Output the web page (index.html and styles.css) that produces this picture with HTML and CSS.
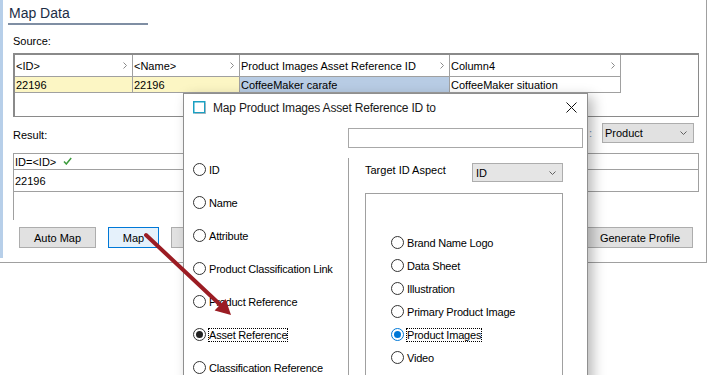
FILE: index.html
```html
<!DOCTYPE html>
<html>
<head>
<meta charset="utf-8">
<link rel="stylesheet" href="styles.css">
</head>
<body>
<div class="panel">
  <div class="inner">
    <div class="title">Map Data</div>
    <div class="label src-label">Source:</div>
    <div class="src">
      <div class="srow head">
        <div class="cell c1"><span>&lt;ID&gt;</span><svg class="chev" width="4" height="7" viewBox="0 0 4 7"><polyline points="0.5,0.5 3.5,3.5 0.5,6.5" fill="none" stroke="#8a8a8a" stroke-width="1"/></svg></div>
        <div class="cell c2"><span>&lt;Name&gt;</span><svg class="chev" width="4" height="7" viewBox="0 0 4 7"><polyline points="0.5,0.5 3.5,3.5 0.5,6.5" fill="none" stroke="#8a8a8a" stroke-width="1"/></svg></div>
        <div class="cell c3"><span>Product Images Asset Reference ID</span><svg class="chev" width="4" height="7" viewBox="0 0 4 7"><polyline points="0.5,0.5 3.5,3.5 0.5,6.5" fill="none" stroke="#8a8a8a" stroke-width="1"/></svg></div>
        <div class="cell c4"><span>Column4</span><svg class="chev" width="4" height="7" viewBox="0 0 4 7"><polyline points="0.5,0.5 3.5,3.5 0.5,6.5" fill="none" stroke="#8a8a8a" stroke-width="1"/></svg></div>
      </div>
      <div class="srow data">
        <div class="cell c1 yel">22196</div>
        <div class="cell c2 yel">22196</div>
        <div class="cell c3 sel">CoffeeMaker carafe</div>
        <div class="cell c4">CoffeeMaker situation</div>
      </div>
    </div>
    <div class="result-bar">
      <div class="label res-label">Result:</div>
      <div class="type">
        <span class="type-label">:</span>
        <div class="select product"><span>Product</span><svg width="7" height="4" viewBox="0 0 7 4"><polyline points="0.5,0.5 3.5,3.5 6.5,0.5" fill="none" stroke="#606060" stroke-width="1"/></svg></div>
      </div>
    </div>
    <div class="result">
      <div class="rrow r1"><span>ID=&lt;ID&gt;</span><svg class="check" width="9" height="8" viewBox="0 0 9 8"><path d="M1 4.5 L3.3 7 L8.2 1" fill="none" stroke="#3b9b3b" stroke-width="1.5"/></svg></div>
      <div class="rrow r2">22196</div>
    </div>
    <div class="buttons">
      <div class="left-btns">
        <button class="btn b-auto">Auto Map</button>
        <button class="btn b-map primary">Map</button>
        <button class="btn b-edit"></button>
      </div>
      <button class="btn b-gen">Generate Profile</button>
    </div>
  </div>
</div>

<div class="dialog">
  <div class="dlg-title">
    <svg class="dlg-icon" width="13" height="13" viewBox="0 0 13 13"><rect x="0.75" y="0.75" width="11" height="11" fill="#fff" stroke="#1aa0c2" stroke-width="1.5"/><path d="M12.5 2 V12.5 H2" fill="none" stroke="#9fb4bf" stroke-width="1"/></svg>
    <span class="dlg-text">Map Product Images Asset Reference ID to</span>
    <svg class="dlg-close" width="11" height="11" viewBox="0 0 11 11"><path d="M0.5 0.5 L10.5 10.5 M10.5 0.5 L0.5 10.5" stroke="#111" stroke-width="1"/></svg>
  </div>
  <div class="search"></div>
  <div class="dlg-body">
    <div class="left-col">
      <div class="opt"><span class="radio"></span><span>ID</span></div>
      <div class="opt"><span class="radio"></span><span>Name</span></div>
      <div class="opt"><span class="radio"></span><span>Attribute</span></div>
      <div class="opt"><span class="radio"></span><span>Product Classification Link</span></div>
      <div class="opt"><span class="radio"></span><span>Product Reference</span></div>
      <div class="opt"><span class="radio checked"></span><span class="focus">Asset Reference</span></div>
      <div class="opt"><span class="radio"></span><span>Classification Reference</span></div>
    </div>
    <div class="right-col">
      <div class="aspect-row">
        <span class="aspect-label">Target ID Aspect</span>
        <div class="select idsel"><span>ID</span><svg width="7" height="4" viewBox="0 0 7 4"><polyline points="0.5,0.5 3.5,3.5 6.5,0.5" fill="none" stroke="#606060" stroke-width="1"/></svg></div>
      </div>
      <div class="box">
        <div class="opt2"><span class="radio"></span><span>Brand Name Logo</span></div>
        <div class="opt2"><span class="radio"></span><span>Data Sheet</span></div>
        <div class="opt2"><span class="radio"></span><span>Illustration</span></div>
        <div class="opt2"><span class="radio"></span><span>Primary Product Image</span></div>
        <div class="opt2"><span class="radio checked blue"></span><span class="focus">Product Images</span></div>
        <div class="opt2"><span class="radio"></span><span>Video</span></div>
      </div>
    </div>
  </div>
</div>

<svg class="arrow" width="708" height="375" viewBox="0 0 708 375">
  <line x1="146" y1="235" x2="221" y2="305.5" stroke="#9b1c23" stroke-width="4" stroke-linecap="round"/>
  <polygon points="231,315 214.6,310.5 225.5,299" fill="#9b1c23"/>
</svg>
</body>
</html>
```

FILE: styles.css
```css
html, body {
  margin: 0;
  padding: 0;
  background: #fff;
}
body {
  font-family: "Liberation Sans", Arial, sans-serif;
  font-size: 11px;
  color: #000;
  width: 708px;
  height: 375px;
  overflow: hidden;
  position: relative;
}

.panel {
  width: 707px;
  height: 263px;
  box-sizing: border-box;
  border-right: 1px solid #a0a0a0;
  border-bottom: 1px solid #a0a0a0;
}
.inner {
  height: 258px;
  box-sizing: border-box;
  border-left: 3px solid #b7cfe9;
}

.title {
  margin-left: 5px;
  width: 140px;
  box-sizing: border-box;
  padding: 5px 0 2px 1px;
  line-height: 16px;
  font-size: 14px;
  color: #1c2d45;
  border-bottom: 2px solid #7f8ea3;
}

.label {
  line-height: 14px;
}
.src-label {
  margin: 9px 0 0 10px;
}

.src {
  margin: 5px 0 0 10px;
  width: 686px;
  height: 64px;
  box-sizing: border-box;
  border-top: 2px solid #8a8a8a;
  border-left: 2px solid #8a8a8a;
  border-right: 1px solid #8a8a8a;
  border-bottom: 1px solid #8a8a8a;
}
.srow {
  display: flex;
}
.cell {
  box-sizing: border-box;
  border-right: 1px solid #a0a0a0;
  border-bottom: 1px solid #a0a0a0;
  padding-left: 1px;
  display: flex;
  align-items: center;
  white-space: nowrap;
  overflow: hidden;
}
.head .cell {
  height: 22px;
  justify-content: space-between;
}
.chev {
  margin-right: 5px;
  flex: none;
}
.data .cell {
  height: 16px;
}
.c1 { width: 118px; }
.c2 { width: 107px; }
.c3 { width: 210px; }
.c4 { width: 171px; }
.yel { background: #fcf6c4; }
.sel { background: #b8cce4; }

.result-bar {
  margin: 6px 12px 0 10px;
  height: 20px;
  display: flex;
  justify-content: space-between;
}
.res-label {
  align-self: flex-end;
  margin-bottom: 1px;
}
.type {
  display: flex;
  align-items: center;
}
.type-label {
  margin-right: 10px;
  color: #6f8fb8;
}
.select {
  box-sizing: border-box;
  background: #e1e1e1;
  border: 1px solid #adadad;
  display: flex;
  align-items: center;
  justify-content: space-between;
}
.product {
  width: 92px;
  height: 20px;
  padding: 0 6px 0 2px;
}

.result {
  margin: 10px 0 0 10px;
  width: 686px;
  height: 67px;
  box-sizing: border-box;
  border-left: 1px solid #a0a0a0;
}
.rrow {
  box-sizing: border-box;
  border-right: 1px solid #a0a0a0;
  border-bottom: 1px solid #a0a0a0;
  padding-left: 1px;
  display: flex;
  align-items: center;
}
.r1 {
  height: 17px;
  border-top: 1px solid #a0a0a0;
}
.r2 {
  height: 22px;
}
.check {
  margin-left: 7px;
  margin-top: -2px;
}

.buttons {
  margin: 7px 13px 0 16px;
  display: flex;
  justify-content: space-between;
}
.left-btns {
  display: flex;
  gap: 12px;
}
.btn {
  height: 21px;
  box-sizing: border-box;
  padding: 0;
  margin: 0;
  font-family: "Liberation Sans", Arial, sans-serif;
  font-size: 11px;
  color: #000;
  background: #e1e1e1;
  border: 1px solid #adadad;
  border-radius: 0;
}
.b-auto { width: 77px; }
.b-map { width: 51px; }
.b-edit { width: 80px; }
.b-gen { width: 106px; }
.primary {
  background: #e5f1fb;
  border-color: #0078d7;
}

/* Dialog */
.dialog {
  position: absolute;
  left: 183px;
  top: 93px;
  width: 405px;
  height: 300px;
  box-sizing: border-box;
  background: #fff;
  border: 1px solid #8f8f8f;
  box-shadow: 5px 4px 12px rgba(0, 0, 0, 0.28);
}
.dlg-title {
  height: 27px;
  display: flex;
  align-items: center;
  padding-left: 9px;
}
.dlg-icon {
  flex: none;
}
.dlg-text {
  margin-left: 7px;
  font-size: 12px;
  letter-spacing: -0.2px;
  color: #1a1a1a;
  flex: 1;
}
.dlg-close {
  margin-right: 10px;
  flex: none;
}
.search {
  margin: 7px 0 0 164px;
  width: 235px;
  height: 20px;
  box-sizing: border-box;
  border: 1px solid #a8a8a8;
}
.dlg-body {
  margin-top: 5px;
  display: flex;
}
.left-col {
  width: 164px;
  flex: none;
  box-sizing: border-box;
  padding-left: 9px;
}
.opt {
  height: 33px;
  display: flex;
  align-items: center;
  white-space: nowrap;
  letter-spacing: -0.2px;
}
.radio {
  width: 13px;
  height: 13px;
  box-sizing: border-box;
  border: 1px solid #333;
  border-radius: 50%;
  background: #fff;
  margin-right: 3px;
  flex: none;
  display: flex;
  align-items: center;
  justify-content: center;
}
.radio.checked::after {
  content: "";
  width: 7px;
  height: 7px;
  border-radius: 50%;
  background: #222;
}
.radio.blue {
  border-color: #0078d7;
}
.radio.blue::after {
  background: #0078d7;
}
.focus {
  outline: 1px dotted #000;
}
.right-col {
  flex: 1;
  margin-top: 5px;
  border-left: 1px solid #a0a0a0;
  padding-left: 16px;
}
.aspect-row {
  margin-top: 5px;
  display: flex;
  align-items: flex-start;
}
.aspect-label {
  width: 107px;
  line-height: 14px;
  flex: none;
}
.idsel {
  width: 91px;
  height: 19px;
  padding: 0 6px 0 3px;
  background: #e5e5e5;
}
.box {
  margin-top: 11px;
  width: 198px;
  height: 200px;
  box-sizing: border-box;
  border: 1px solid #a0a0a0;
  padding: 37px 0 0 25px;
}
.opt2 {
  height: 23px;
  display: flex;
  align-items: center;
  white-space: nowrap;
  letter-spacing: -0.2px;
}

.arrow {
  position: absolute;
  left: 0;
  top: 0;
  pointer-events: none;
}
```
